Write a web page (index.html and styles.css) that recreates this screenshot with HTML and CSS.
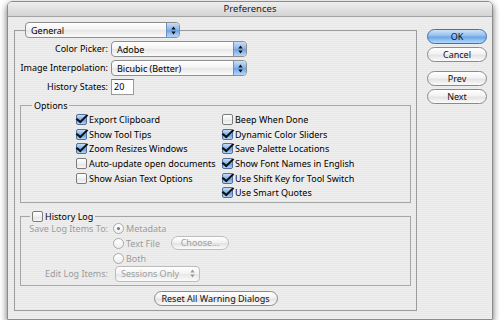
FILE: index.html
```html
<!DOCTYPE html>
<html lang="en">
  <head>
    <meta charset="UTF-8" />
    <title>Preferences</title>
    <link rel="stylesheet" href="styles.css">
  </head>
  <body>
    <div class="window">
      <div class="titlebar">Preferences</div>
      <div class="content">
        <fieldset class="panel">
          <legend>
            <span class="popup general">General<i class="arrows"><svg width="5" height="9" viewBox="0 0 5 9"><path d="M0.3 3.6 L2.5 0.4 L4.7 3.6Z M0.3 5.4 L2.5 8.6 L4.7 5.4Z" /></svg></i></span>
          </legend>

          <div class="form">
            <label>Color Picker:</label>
            <span class="popup picker">Adobe<i class="arrows"><svg width="5" height="9" viewBox="0 0 5 9"><path d="M0.3 3.6 L2.5 0.4 L4.7 3.6Z M0.3 5.4 L2.5 8.6 L4.7 5.4Z" /></svg></i></span>
            <label>Image Interpolation:</label>
            <span class="popup picker">Bicubic (Better)<i class="arrows"><svg width="5" height="9" viewBox="0 0 5 9"><path d="M0.3 3.6 L2.5 0.4 L4.7 3.6Z M0.3 5.4 L2.5 8.6 L4.7 5.4Z" /></svg></i></span>
            <label>History States:</label>
            <span class="field">20</span>
          </div>

          <fieldset class="group options">
            <legend>Options</legend>
            <div class="checks">
              <div class="col">
                <div class="item"><span class="check on"></span>Export Clipboard</div>
                <div class="item"><span class="check on"></span>Show Tool Tips</div>
                <div class="item"><span class="check on"></span>Zoom Resizes Windows</div>
                <div class="item"><span class="check"></span>Auto-update open documents</div>
                <div class="item"><span class="check"></span>Show Asian Text Options</div>
              </div>
              <div class="col">
                <div class="item"><span class="check"></span>Beep When Done</div>
                <div class="item"><span class="check on"></span>Dynamic Color Sliders</div>
                <div class="item"><span class="check on"></span>Save Palette Locations</div>
                <div class="item"><span class="check on"></span>Show Font Names in English</div>
                <div class="item"><span class="check on"></span>Use Shift Key for Tool Switch</div>
                <div class="item"><span class="check on"></span>Use Smart Quotes</div>
              </div>
            </div>
          </fieldset>

          <fieldset class="group history">
            <legend><span class="check"></span>History Log</legend>
            <div class="log">
              <label>Save Log Items To:</label>
              <div class="item"><span class="radio on"></span>Metadata</div>
              <div class="item row2"><span class="radio"></span>Text File<span class="btn small" >Choose...</span></div>
              <div class="item row3"><span class="radio"></span>Both</div>
              <label class="row4">Edit Log Items:</label>
              <span class="popup sessions">Sessions Only<i class="arrows off"><svg width="5" height="9" viewBox="0 0 5 9"><path d="M0.3 3.6 L2.5 0.4 L4.7 3.6Z M0.3 5.4 L2.5 8.6 L4.7 5.4Z" /></svg></i></span>
            </div>
          </fieldset>

          <div class="reset">
            <button class="btn">Reset All Warning Dialogs</button>
          </div>
        </fieldset>

        <div class="actions">
          <button class="btn default">OK</button>
          <button class="btn">Cancel</button>
          <button class="btn prev">Prev</button>
          <button class="btn">Next</button>
        </div>
      </div>
    </div>
  </body>
</html>
```

FILE: styles.css
```css
* {
  box-sizing: border-box;
}

body {
  margin: 0;
  background: #fff;
  font-family: "Noto Sans", "DejaVu Sans", sans-serif;
  font-size: 9px;
  color: #000;
}

.window {
  width: 486px;
  height: 319px;
  margin: 1px 0 0 7px;
  border: 1px solid #8c8c8c;
  border-radius: 5px 5px 0 0;
  background: repeating-linear-gradient(to bottom, #eeeeee 0, #eeeeee 1px, #e8e8e8 1px, #e8e8e8 2px);
  box-shadow: 0 3px 7px rgba(0, 0, 0, 0.6);
  overflow: hidden;
}

.titlebar {
  height: 15px;
  line-height: 14px;
  text-align: center;
  font-size: 9.5px;
  color: #222;
  background: linear-gradient(#eeeeee, #d4d4d4);
  border-bottom: 1px solid #a4a4a4;
}

.content {
  display: flex;
  align-items: flex-start;
  padding: 0 5px 0 6px;
}

/* 外框 */
.panel {
  width: 403px;
  min-width: 0;
  margin: 5px 0 0;
  padding: 3px 5px 4px;
  border: 1px solid #9c9c9c;
}

.panel > legend {
  margin-left: 5px;
  padding: 0;
}

/* 弹出菜单 */
.popup {
  display: flex;
  align-items: center;
  height: 16px;
  padding-left: 5px;
  border: 1px solid #8e8e8e;
  border-radius: 4px;
  background: linear-gradient(#ffffff, #f2f2f2 50%, #e6e6e6 51%, #fbfbfb);
  white-space: nowrap;
}

.popup .arrows {
  display: flex;
  align-items: center;
  justify-content: center;
  width: 13px;
  height: 14px;
  margin-left: auto;
  border-left: 1px solid #6f8fbf;
  border-radius: 0 3px 3px 0;
  background: linear-gradient(#c9def6, #86b3e8 50%, #6ea2e2 51%, #b5d6fa);
}

.popup .arrows path {
  fill: #111;
}

.popup .arrows.off {
  border-left: none;
  background: none;
}

.popup .arrows.off path {
  fill: #9a9a9a;
}

.general {
  width: 155px;
}

.picker {
  width: 136px;
}

.sessions {
  width: 85px;
  margin-left: 2px;
  color: #a0a0a0;
  border-color: #bcbcbc;
}

.form {
  display: grid;
  grid-template-columns: 88px auto;
  column-gap: 3px;
  row-gap: 3px;
  align-items: center;
  justify-items: start;
}

.form label {
  justify-self: end;
  line-height: 16px;
}

.field {
  width: 23px;
  height: 16px;
  padding-left: 2px;
  line-height: 14px;
  background: #fff;
  border: 1px solid #9a9a9a;
  border-top-color: #6f6f6f;
}

/* 分组框 */
.group {
  min-width: 0;
  margin: 5px 0 0;
  padding: 0;
  border: 1px solid #a6a6a6;
}

.group legend {
  margin-left: 11px;
  padding: 0 2px;
  line-height: 11px;
}

.checks {
  display: flex;
  padding: 1px 0 2px 55px;
}

.checks .col {
  width: 146px;
}

.checks .col:last-child {
  width: auto;
}

.item {
  display: flex;
  align-items: center;
  height: 14.7px;
  white-space: nowrap;
}

/* 复选框 */
.check {
  position: relative;
  flex: none;
  width: 11px;
  height: 11px;
  margin-right: 2px;
  border: 1px solid #7c7c7c;
  border-radius: 2px;
  background: linear-gradient(#ffffff, #f0f0f0 50%, #e2e2e2 51%, #f8f8f8);
}

.check.on {
  border-color: #52709a;
  background: linear-gradient(#c6ddf7, #7fb0e8 50%, #5f98df 51%, #aed4fb);
}

.check.on::after {
  content: "";
  position: absolute;
  left: 2px;
  top: -3px;
  width: 4px;
  height: 9px;
  border: solid #111;
  border-width: 0 2px 2px 0;
  transform: rotate(38deg) skewX(-8deg);
}

.history {
  margin-top: 8px;
}

.history legend {
  display: flex;
  align-items: center;
  margin-left: 9px;
}

.history legend .check {
  margin-right: 2px;
}

.log {
  display: grid;
  grid-template-columns: 87px auto;
  grid-template-rows: 15px 15px 15px 16px;
  column-gap: 5px;
  align-items: center;
  justify-items: start;
  margin-top: -1.5px;
  padding-bottom: 3.5px;
  color: #9c9c9c;
}

.log label {
  justify-self: end;
}

.log .item {
  height: 15px;
}

.log .row2,
.log .row3 {
  grid-column: 2;
}

.log .row4 {
  grid-column: 1;
}

/* 单选框 */
.radio {
  position: relative;
  flex: none;
  width: 11px;
  height: 11px;
  margin-right: 2px;
  border: 1px solid #a9a9a9;
  border-radius: 50%;
  background: linear-gradient(#ffffff, #efefef);
}

.radio.on::after {
  content: "";
  position: absolute;
  left: 3px;
  top: 3px;
  width: 3px;
  height: 3px;
  border-radius: 50%;
  background: #777;
}

/* 按钮 */
.btn {
  display: block;
  width: 60px;
  height: 15px;
  padding: 0;
  font: inherit;
  line-height: 13px;
  text-align: center;
  color: #111;
  border: 1px solid #8a8a8a;
  border-radius: 8px;
  background: linear-gradient(#ffffff, #f2f2f2 45%, #e3e3e3 55%, #fbfbfb);
}

.btn.default {
  border-color: #4a6f9f;
  background: linear-gradient(#cfe3f8, #8dbbee 48%, #6aa3e6 52%, #b2d9fc);
}

.btn.small {
  width: 58px;
  height: 14px;
  margin-left: 11px;
  line-height: 12px;
  color: #a0a0a0;
  border-color: #bdbdbd;
}

.reset {
  display: flex;
  justify-content: center;
  margin-top: 5px;
}

.reset .btn {
  width: 124px;
}

.actions {
  display: flex;
  flex-direction: column;
  gap: 3px;
  width: 60px;
  margin-left: 10px;
  padding-top: 12px;
}

.actions .prev {
  margin-top: 6px;
}
```
